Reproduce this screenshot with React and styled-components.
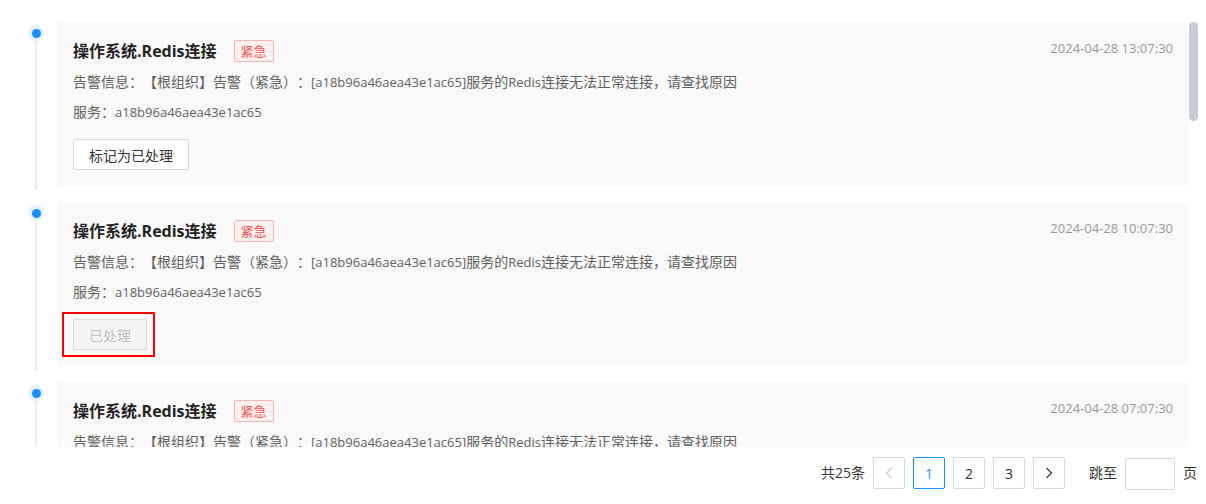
import styled, { createGlobalStyle } from "styled-components";

const GlobalStyle = createGlobalStyle`
  html, body {
    margin: 0;
    padding: 0;
    background: #fff;
  }
  body {
    font-family: "Open Sans", "Noto Sans CJK SC", sans-serif;
    color: #333;
    text-spacing-trim: space-all;
  }
`;

const SERVICE_ID = "a18b96a46aea43e1ac65";

const alerts = [
  { time: "2024-04-28 13:07:30", done: false },
  { time: "2024-04-28 10:07:30", done: true, marked: true },
  { time: "2024-04-28 07:07:30", done: false },
  { time: "2024-04-28 04:07:30", done: false },
  { time: "2024-04-28 01:07:30", done: true },
  { time: "2024-04-27 22:07:30", done: false },
  { time: "2024-04-27 19:07:30", done: false },
  { time: "2024-04-27 16:07:30", done: true },
  { time: "2024-04-27 13:07:30", done: false },
  { time: "2024-04-27 10:07:30", done: false },
];

const Chevron = ({ dir, color }) => (
  <svg width="8" height="12" viewBox="0 0 8 12" fill="none">
    <polyline
      points={dir === "left" ? "6.5,1 1.5,6 6.5,11" : "1.5,1 6.5,6 1.5,11"}
      stroke={color}
      strokeWidth="1.2"
    />
  </svg>
);

const App = () => {
  return (
    <Page lang="zh-CN">
      <GlobalStyle />
      <Viewport>
        <Scroller>
          {alerts.map((a, i) => (
            <Item key={i}>
              <Rail>
                <Dot />
                <Line />
              </Rail>
              <Card>
                <Header>
                  <Title>操作系统.Redis连接</Title>
                  <Tag>紧急</Tag>
                  <Time>{a.time}</Time>
                </Header>
                <Text>
                  告警信息：【根组织】告警（紧急）：<Latin>[{SERVICE_ID}]</Latin>服务的
                  <Latin>Redis</Latin>连接无法正常连接，请查找原因
                </Text>
                <Text>
                  服务：<Latin>{SERVICE_ID}</Latin>
                </Text>
                <Actions>
                  <Mark $marked={a.marked}>
                    <Button disabled={a.done}>{a.done ? "已处理" : "标记为已处理"}</Button>
                  </Mark>
                </Actions>
              </Card>
            </Item>
          ))}
        </Scroller>
        <Track>
          <Thumb />
        </Track>
      </Viewport>
      <Pager>
        <Total>共25条</Total>
        <PageBtn disabled>
          <Chevron dir="left" color="#c8c8c8" />
        </PageBtn>
        <PageBtn $active>1</PageBtn>
        <PageBtn>2</PageBtn>
        <PageBtn>3</PageBtn>
        <PageBtn>
          <Chevron dir="right" color="#333" />
        </PageBtn>
        <Jump>跳至</Jump>
        <JumpInput />
        <Suffix>页</Suffix>
      </Pager>
    </Page>
  );
};

export default App;

const Page = styled.div`
  width: 1206px;
  height: 504px;
  padding-top: 22px;
  box-sizing: border-box;
  display: flex;
  flex-direction: column;
  overflow: hidden;
`;

const Viewport = styled.div`
  display: flex;
  width: 1198px;
  height: 425px;
`;

const Scroller = styled.div`
  flex: 1;
  height: 100%;
  overflow: hidden;
  padding-right: 1px;
`;

const Track = styled.div`
  width: 9px;
  flex-shrink: 0;
`;

const Thumb = styled.div`
  height: 99px;
  border-radius: 5px;
  background: #c8cdd5;
`;

const Item = styled.div`
  display: flex;
  padding-bottom: 16px;
`;

const Rail = styled.div`
  width: 16px;
  margin: 0 13px 0 28px;
  padding-top: 3px;
  display: flex;
  flex-direction: column;
  align-items: center;
  flex-shrink: 0;
`;

const Dot = styled.span`
  width: 16px;
  height: 16px;
  border-radius: 50%;
  background: #e6f1fe;
  display: flex;
  align-items: center;
  justify-content: center;
  position: relative;
  z-index: 1;

  &::after {
    content: "";
    width: 9px;
    height: 9px;
    border-radius: 50%;
    background: #1890ff;
  }
`;

const Line = styled.span`
  flex: 1;
  width: 2px;
  background: #ebebeb;
  margin-bottom: -4px;
`;

const Card = styled.div`
  flex: 1;
  background: #f9f9f9;
  border-radius: 4px;
  padding: 18px 15px 16px 16px;
  min-width: 0;
`;

const Header = styled.div`
  display: flex;
  align-items: center;
  height: 22px;
`;

const Title = styled.span`
  font-size: 16px;
  font-weight: 700;
  color: #222;
  line-height: 22px;
`;

const Tag = styled.span`
  margin-left: 17px;
  height: 22px;
  box-sizing: border-box;
  padding: 0 6px;
  border: 1px solid #ffb3b0;
  background: #fff1f0;
  color: #ff4d4f;
  border-radius: 2px;
  font-size: 13px;
  line-height: 20px;
`;

const Time = styled.span`
  margin-left: auto;
  align-self: flex-start;
  margin-top: -2px;
  font-size: 13px;
  color: #999;
  line-height: 20px;
`;

const Text = styled.div`
  margin-top: 10px;
  font-size: 14px;
  line-height: 20px;
  color: #616161;
  white-space: nowrap;
`;

const Latin = styled.span`
  font-size: 13px;
`;

const Actions = styled.div`
  margin-top: 17px;
  display: flex;
`;

const Mark = styled.span`
  position: relative;
  display: inline-flex;

  &::after {
    content: "";
    display: ${(p) => (p.$marked ? "block" : "none")};
    position: absolute;
    top: -7px;
    bottom: -7px;
    left: -11px;
    right: -8px;
    border: 2px solid #f00;
    pointer-events: none;
  }
`;

const Button = styled.button`
  height: 31px;
  padding: 0 15px;
  font-family: inherit;
  font-size: 14px;
  border-radius: 2px;
  border: 1px solid #d9d9d9;
  background: #fff;
  color: #333;
  cursor: pointer;

  &:disabled {
    background: #f5f5f5;
    color: #bfbfbf;
    cursor: not-allowed;
  }
`;

const Pager = styled.div`
  flex: 1;
  display: flex;
  justify-content: flex-end;
  align-items: flex-start;
  padding: 10px 9px 0 0;
  font-size: 14px;
  color: #333;
`;

const Total = styled.span`
  line-height: 32px;
  margin-right: 8px;
`;

const PageBtn = styled.button`
  width: 32px;
  height: 32px;
  margin-left: 8px;
  box-sizing: border-box;
  display: flex;
  align-items: center;
  justify-content: center;
  font-family: inherit;
  font-size: 14px;
  background: #fff;
  border-radius: 2px;
  border: 1px solid ${(p) => (p.$active ? "#1890ff" : "#d9d9d9")};
  color: ${(p) => (p.$active ? "#1890ff" : "#333")};
  cursor: pointer;
  padding: 0;

  &:first-of-type {
    margin-left: 0;
  }
`;

const Jump = styled.span`
  margin-left: 24px;
  line-height: 32px;
`;

const JumpInput = styled.input`
  width: 50px;
  height: 32px;
  box-sizing: border-box;
  margin: 1px 8px 0;
  border: 1px solid #d9d9d9;
  border-radius: 2px;
`;

const Suffix = styled.span`
  line-height: 32px;
`;
